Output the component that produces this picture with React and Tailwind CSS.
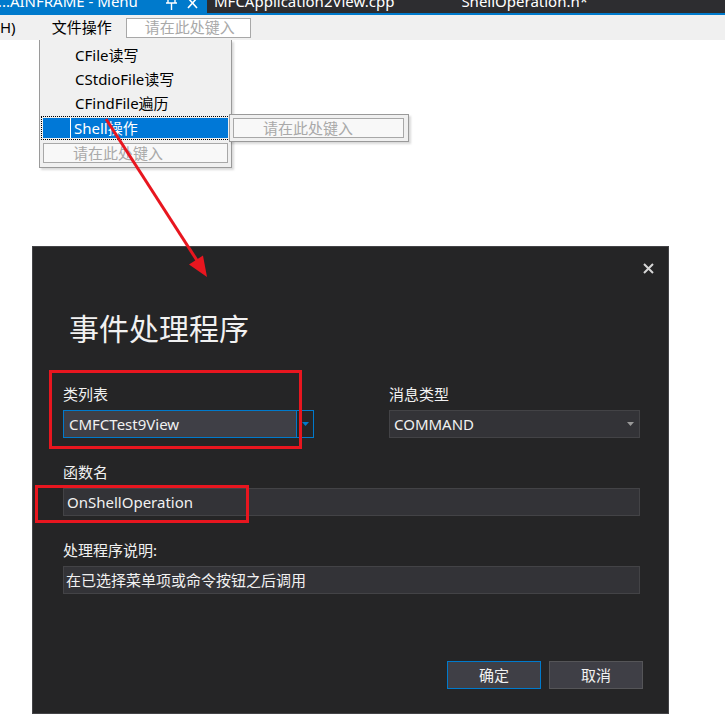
const FONT = { fontFamily: '"Noto Sans", "Noto Sans CJK SC", sans-serif' };

function Placeholder({ className }) {
  return (
    <div className={`border border-[#a8a8a8] text-[15px] leading-none text-[#a9a9a9] flex items-center ${className}`}>
      请在此处键入
    </div>
  );
}

function TabBar() {
  return (
    <div className="h-[13px] flex bg-[#2d2d30] overflow-hidden text-white text-[15px]">
      <div className="w-[207px] bg-[#007acc] flex relative">
        <span className="-mt-[9px] leading-[20px] whitespace-nowrap -ml-[6px]">l...AINFRAME - Menu</span>
        {/* pin + close */}
        <svg className="absolute left-[165px] top-0" width="36" height="13" viewBox="0 0 36 13">
          <path d="M1 3h11M6.5 3v7M3 0v3M10 0v3" stroke="#fff" strokeWidth="1.4" fill="none" />
          <path d="M23 -2l9 10M32 -2l-9 10" stroke="#fff" strokeWidth="1.6" fill="none" />
        </svg>
      </div>
      <span className="-mt-[9px] leading-[20px] ml-[7px] whitespace-nowrap">MFCApplication2View.cpp</span>
      <span className="-mt-[9px] leading-[20px] ml-[67px] whitespace-nowrap">ShellOperation.h*</span>
    </div>
  );
}

function MenuBar() {
  return (
    <div className="h-[25px] bg-[#f0f0f0] flex items-center text-[15px] text-black">
      <span className="leading-none">H)</span>
      <span className="ml-[36px] leading-none">文件操作</span>
      <Placeholder className="ml-[14px] w-[125px] h-[20px] bg-white pl-[18px]" />
    </div>
  );
}

function Dropdown() {
  return (
    <div className="absolute left-[39px] top-[40px] w-[193px] h-[128px] bg-[#f0f0f0] border border-t-0 border-[#9a9a9a] shadow-[2px_2px_2px_rgba(0,0,0,0.15)] pt-[3px] text-[15px] text-black">
      <div className="h-[24px] flex items-center pl-[35px]">CFile读写</div>
      <div className="h-[24px] flex items-center pl-[35px]">CStdioFile读写</div>
      <div className="h-[24px] flex items-center pl-[35px]">CFindFile遍历</div>
      <div className="mt-[1px] ml-[1px] w-[189px] h-[24px] border border-dotted border-black p-[1px]">
        <div className="h-full flex bg-[#0078d7] text-white">
          <div className="w-[28px] border-r border-white" />
          <div className="flex items-center pl-[3px]">Shell操作</div>
        </div>
      </div>
      <Placeholder className="mt-[3px] ml-[3px] w-[185px] h-[20px] bg-[#f8f8f8] pl-[29px]" />
    </div>
  );
}

function SubMenu() {
  return (
    <div className="absolute left-[229px] top-[114px] w-[180px] h-[28px] bg-[#f0f0f0] border border-[#9a9a9a] shadow-[2px_2px_2px_rgba(0,0,0,0.15)] p-[3px]">
      <Placeholder className="w-[171px] h-[20px] bg-[#f8f8f8] pl-[29px]" />
    </div>
  );
}

function Caret({ color }) {
  return (
    <svg width="7" height="4" viewBox="0 0 7 4">
      <path d="M0 0h7L3.5 4z" fill={color} />
    </svg>
  );
}

function Dialog() {
  return (
    <div className="ml-[32px] mt-[206px] w-[637px] h-[468px] bg-[#252526] border border-[#434346] text-[#f1f1f1] text-[15px] pl-[30px] pr-[28px]">
      {/* close */}
      <div className="pt-[14px] h-[30px] flex justify-end -mr-[14px]">
        <svg width="11" height="16" viewBox="0 0 11 16">
          <path d="M1 3l9 9M10 3l-9 9" stroke="#d6d6d6" strokeWidth="2" fill="none" />
        </svg>
      </div>

      <div className="mt-[34px] text-[30px] leading-[36px] pl-[6px]">事件处理程序</div>

      {/* class + message type */}
      <div className="mt-[37px] flex">
        <div className="w-[251px]">
          <div className="h-[20px] leading-[20px]">类列表</div>
          <div className="mt-[6px] h-[28px] flex border border-[#007acc]">
            <div className="flex-1 bg-[#3f3f46] flex items-center pl-[5px] border-r border-[#007acc]">CMFCTest9View</div>
            <div className="w-[16px] flex items-center justify-center">
              <Caret color="#007acc" />
            </div>
          </div>
        </div>
        <div className="ml-[75px] w-[251px]">
          <div className="h-[20px] leading-[20px]">消息类型</div>
          <div className="mt-[6px] h-[28px] flex items-center justify-between bg-[#333337] border border-[#434346] pl-[4px] pr-[5px]">
            <span>COMMAND</span>
            <Caret color="#999999" />
          </div>
        </div>
      </div>

      {/* function name */}
      <div className="mt-[24px] h-[20px] leading-[20px]">函数名</div>
      <div className="mt-[6px] h-[28px] bg-[#333337] border border-[#434346] flex items-center pl-[3px]">OnShellOperation</div>

      {/* description */}
      <div className="mt-[24px] h-[20px] leading-[20px]">处理程序说明:</div>
      <div className="mt-[6px] h-[28px] bg-[#333337] border border-[#434346] flex items-center pl-[2px]">在已选择菜单项或命令按钮之后调用</div>

      {/* buttons */}
      <div className="mt-[67px] flex justify-end gap-[8px] -mr-[3px]">
        <button className="w-[94px] h-[28px] bg-[#3f3f46] border border-[#007acc] text-[#f1f1f1]">确定</button>
        <button className="w-[94px] h-[28px] bg-[#3f3f46] border border-[#555558] text-[#f1f1f1]">取消</button>
      </div>
    </div>
  );
}

export default function App() {
  return (
    <div className="relative w-[725px] h-[721px] bg-white overflow-hidden" style={FONT}>
      <TabBar />
      <div className="h-[2px] bg-[#007acc]" />
      <MenuBar />
      <Dialog />

      <Dropdown />
      <SubMenu />

      {/* annotation boxes */}
      <div className="absolute left-[49px] top-[370px] w-[253px] h-[79px] border-[3px] border-[#e8161f]" />
      <div className="absolute left-[35px] top-[485px] w-[214px] h-[38px] border-[3px] border-[#e8161f]" />

      {/* annotation arrow */}
      <svg className="absolute left-0 top-0" width="725" height="721">
        <line x1="106" y1="119" x2="198" y2="262" stroke="#e8161f" strokeWidth="3" />
        <path d="M207 277L203 255.5L189 264.5Z" fill="#e8161f" />
      </svg>
    </div>
  );
}
